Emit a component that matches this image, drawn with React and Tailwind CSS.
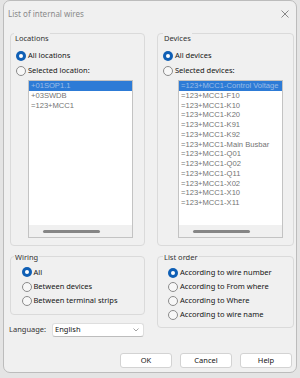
import React from 'react';

const locations = ['+01SOP1.1', '+03SWDB', '=123+MCC1'];

const devices = [
    '=123+MCC1-Control Voltage',
    '=123+MCC1-F10',
    '=123+MCC1-K10',
    '=123+MCC1-K20',
    '=123+MCC1-K91',
    '=123+MCC1-K92',
    '=123+MCC1-Main Busbar',
    '=123+MCC1-Q01',
    '=123+MCC1-Q02',
    '=123+MCC1-Q11',
    '=123+MCC1-X02',
    '=123+MCC1-X10',
    '=123+MCC1-X11',
];

const Radio = ({ checked }) => (
    checked ? (
        <span className="w-[10px] h-[10px] rounded-full bg-[#0f5fb5] flex items-center justify-center shrink-0">
            <span className="w-[4px] h-[4px] rounded-full bg-white" />
        </span>
    ) : (
        <span className="w-[10px] h-[10px] rounded-full border border-[#8b8b8b] bg-[#f7f7f7] shrink-0" />
    )
);

const Option = ({ checked, label, className = '' }) => (
    <div className={`flex items-center gap-[2px] ${className}`}>
        <Radio checked={checked} />
        <span className="text-[#141414]">{label}</span>
    </div>
);

// group frame, the label sits on (or just under) the top border
const Group = ({ title, className = '', labelClass = '', children }) => (
    <div className={`border border-[#dadada] rounded-[4px] ${className}`}>
        <div className={`w-fit bg-[#f0f0f0] px-px leading-[10px] text-[#333] ${labelClass}`}>{title}</div>
        {children}
    </div>
);

const ListBox = ({ items, className = '' }) => (
    <div className={`border border-[#c3c3c3] bg-white flex flex-col w-[105px] h-[158px] ${className}`}>
        <div className="flex-1 overflow-hidden font-['Liberation_Sans',sans-serif] text-[7.6px] text-[#737373]">
            {items.map((item, i) => (
                <div
                    key={item}
                    className={`h-[9.75px] leading-[9.75px] px-[2px] whitespace-nowrap ${i === 0 ? 'bg-[#2d7bd6] text-[#9cbde7]' : ''}`}
                >
                    {item}
                </div>
            ))}
        </div>
        <div className="h-[12px] bg-[#f0f0f0] flex items-center pl-[14px]">
            <div className="w-[57px] h-[3px] rounded-full bg-[#858585]" />
        </div>
    </div>
);

const Button = ({ children }) => (
    <button className="w-[52px] h-[15px] bg-white border border-[#d3d3d3] rounded-[3px] text-[#141414] leading-[13px]">
        {children}
    </button>
);

export default function App() {
    return (
        <div className="h-[378px] bg-[#e4e4e4] pl-[3px] font-['Noto_Sans',sans-serif] text-[7.5px]">
            <div className="w-[294px] h-[373px] bg-[#f0f0f0] border border-[#bcbcbc] rounded-[7px] flex flex-col">
                <div className="h-[25px] flex items-center justify-between pl-[4px] pr-[7px] shrink-0">
                    <span className="text-[8px] text-[#8a8a8a]">List of internal wires</span>
                    <svg width="8" height="8" viewBox="0 0 8 8" className="text-[#7a7a7a]">
                        <path d="M0.5 0.5 L7.5 7.5 M7.5 0.5 L0.5 7.5" stroke="currentColor" strokeWidth="0.9" />
                    </svg>
                </div>

                <div className="flex pl-[6px] pr-[2px] gap-[12px] mt-[7px]">
                    <div className="w-[135px] flex flex-col">
                        <Group title="Locations" className="h-[213px]" labelClass="ml-[3px] -mt-[1.5px]">
                            <Option checked label="All locations" className="h-[15px] mt-[6px] ml-[5px]" />
                            <Option label="Selected location:" className="h-[15px] ml-[5px]" />
                            <ListBox items={locations} className="mt-[1.5px] ml-[17px]" />
                        </Group>

                        <Group title="Wiring" className="h-[59px] mt-[10px]" labelClass="ml-[3px] -mt-[5.5px]">
                            <Option checked label="All" className="h-[14.3px] mt-[3.7px] ml-[10.5px]" />
                            <Option label="Between devices" className="h-[14.3px] ml-[10.5px]" />
                            <Option label="Between terminal strips" className="h-[14.3px] ml-[10.5px]" />
                        </Group>

                        <div className="flex items-center mt-[8px] -ml-px">
                            <span className="text-[#333]">Language:</span>
                            <div className="ml-auto mr-px w-[92px] h-[14px] bg-white border border-[#dedede] border-b-[#bdbdbd] rounded-[3px] flex items-center justify-between pl-[2px] pr-[4px]">
                                <span className="text-[#141414]">English</span>
                                <svg width="6" height="4" viewBox="0 0 6 4">
                                    <path d="M0.5 0.5 L3 3 L5.5 0.5" fill="none" stroke="#8a8a8a" strokeWidth="0.8" />
                                </svg>
                            </div>
                        </div>
                    </div>

                    <div className="w-[137px] flex flex-col">
                        <Group title="Devices" className="h-[213px]" labelClass="ml-[5px] -mt-[1.5px]">
                            <Option checked label="All devices" className="h-[15px] mt-[6px] ml-[5px]" />
                            <Option label="Selected devices:" className="h-[15px] ml-[5px]" />
                            <ListBox items={devices} className="mt-[1.5px] ml-[20px]" />
                        </Group>

                        <Group title="List order" className="h-[72px] mt-[10px]" labelClass="ml-[5px] -mt-[5.5px]">
                            <Option checked label="According to wire number" className="h-[14px] mt-[4px] ml-[10px]" />
                            <Option label="According to From where" className="h-[14px] ml-[10px]" />
                            <Option label="According to Where" className="h-[14px] ml-[10px]" />
                            <Option label="According to wire name" className="h-[14px] ml-[10px]" />
                        </Group>
                    </div>
                </div>

                <div className="mt-auto mb-[4px] pr-[4px] flex justify-end gap-[8px]">
                    <Button>OK</Button>
                    <Button>Cancel</Button>
                    <Button>Help</Button>
                </div>
            </div>
        </div>
    );
}
